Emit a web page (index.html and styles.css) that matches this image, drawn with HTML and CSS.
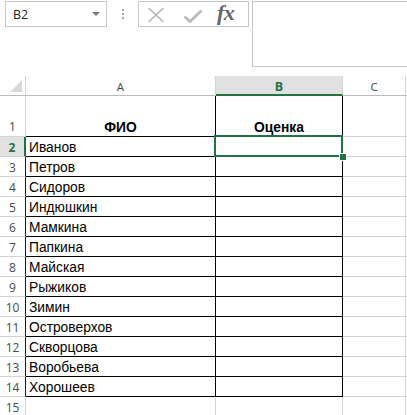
FILE: index.html
```html
<!DOCTYPE html>
<html>
<head>
<meta charset="utf-8">
<link rel="stylesheet" href="styles.css">
</head>
<body>
<div class="toolbar">
  <div class="namebox"><span class="nb-text">B2</span><span class="nb-arrow"></span></div>
  <div class="dots"><i></i><i></i><i></i></div>
  <div class="fbtns">
    <svg class="ic-x" width="20" height="16" viewBox="0 0 20 16"><path d="M2.5 1 L17.5 15 M17.5 1 L2.5 15" stroke="#b4b4b4" stroke-width="1.6" fill="none"/></svg>
    <svg class="ic-ok" width="20" height="14" viewBox="0 0 20 14"><path d="M1.5 7.5 L7 12.5 L18.5 1.5" stroke="#bdbdbd" stroke-width="3" fill="none"/></svg>
    <span class="fx">fx</span>
  </div>
  <div class="fbar"></div>
</div>
<div class="sheet">
  <div class="corner"><span class="tri"></span></div>
  <div class="colh">A</div>
  <div class="colh sel">B</div>
  <div class="colh">C</div>
  <div class="colh end"></div>

  <div class="rowh r1">1</div>
  <div class="cell a r1 bold center">ФИО</div>
  <div class="cell b r1 bold center">Оценка</div>
  <div class="cell c r1"></div>
  <div class="cell e r1"></div>

  <div class="rowh selrow">2</div>
  <div class="cell a">Иванов</div>
  <div class="cell b active"><span class="selbox"></span><span class="handle"></span></div>
  <div class="cell c"></div>
  <div class="cell e"></div>

  <div class="rowh">3</div><div class="cell a">Петров</div><div class="cell b"></div><div class="cell c"></div><div class="cell e"></div>
  <div class="rowh">4</div><div class="cell a">Сидоров</div><div class="cell b"></div><div class="cell c"></div><div class="cell e"></div>
  <div class="rowh">5</div><div class="cell a">Индюшкин</div><div class="cell b"></div><div class="cell c"></div><div class="cell e"></div>
  <div class="rowh">6</div><div class="cell a">Мамкина</div><div class="cell b"></div><div class="cell c"></div><div class="cell e"></div>
  <div class="rowh">7</div><div class="cell a">Папкина</div><div class="cell b"></div><div class="cell c"></div><div class="cell e"></div>
  <div class="rowh">8</div><div class="cell a">Майская</div><div class="cell b"></div><div class="cell c"></div><div class="cell e"></div>
  <div class="rowh">9</div><div class="cell a">Рыжиков</div><div class="cell b"></div><div class="cell c"></div><div class="cell e"></div>
  <div class="rowh">10</div><div class="cell a">Зимин</div><div class="cell b"></div><div class="cell c"></div><div class="cell e"></div>
  <div class="rowh">11</div><div class="cell a">Островерхов</div><div class="cell b"></div><div class="cell c"></div><div class="cell e"></div>
  <div class="rowh">12</div><div class="cell a">Скворцова</div><div class="cell b"></div><div class="cell c"></div><div class="cell e"></div>
  <div class="rowh">13</div><div class="cell a">Воробьева</div><div class="cell b"></div><div class="cell c"></div><div class="cell e"></div>
  <div class="rowh">14</div><div class="cell a">Хорошеев</div><div class="cell b"></div><div class="cell c"></div><div class="cell e"></div>
  <div class="rowh last">15</div><div class="cell a last"></div><div class="cell b last"></div><div class="cell c last"></div><div class="cell e last"></div>
</div>
</body>
</html>
```
FILE: styles.css
```css
html, body {
  margin: 0;
  padding: 0;
  background: #fff;
  overflow: hidden;
}
body {
  width: 407px;
  height: 415px;
  font-family: "Liberation Sans", Arial, sans-serif;
}
.toolbar {
  display: flex;
  align-items: flex-start;
  padding-top: 1px;
  height: 76px;
  box-sizing: border-box;
}
.namebox {
  margin-left: 5px;
  width: 102px;
  height: 26px;
  box-sizing: border-box;
  border: 1px solid #c6c6c6;
  display: flex;
  align-items: center;
  justify-content: space-between;
  padding: 0 6px 0 7px;
}
.nb-text {
  font-family: "Open Sans", "Noto Sans", sans-serif;
  font-size: 12.5px;
  color: #222;
  margin-top: 1px;
}
.nb-arrow {
  width: 0;
  height: 0;
  border-left: 4px solid transparent;
  border-right: 4px solid transparent;
  border-top: 4px solid #777;
  margin-top: -1px;
}
.dots {
  width: 31px;
  height: 26px;
  display: flex;
  flex-direction: column;
  align-items: center;
  justify-content: center;
  gap: 2px;
}
.dots i {
  display: block;
  width: 2px;
  height: 2px;
  background: #a8a8a8;
}
.fbtns {
  width: 111px;
  height: 26px;
  box-sizing: border-box;
  border: 1px solid #c6c6c6;
  display: flex;
  align-items: center;
  padding-left: 7px;
}
.ic-x { margin-top: 1px; }
.ic-ok { margin-left: 17px; margin-top: 3px; }
.fx {
  font-family: "Liberation Serif", "DejaVu Serif", serif;
  font-style: italic;
  font-weight: bold;
  font-size: 22px;
  color: #666;
  margin-left: 14px;
  margin-top: -3px;
  letter-spacing: -0.5px;
}
.fbar {
  margin-left: 3px;
  flex: 1;
  height: 66px;
  box-sizing: border-box;
  border: 1px solid #c6c6c6;
  border-right: none;
}

.sheet {
  display: grid;
  grid-template-columns: 26px 190px 127px 63px 1fr;
  grid-template-rows: 20px 41px repeat(14, 20px);
}
.sheet > div {
  box-sizing: border-box;
  border-right: 1px solid #d4d4d4;
  border-bottom: 1px solid #d4d4d4;
}
.corner {
  position: relative;
  border-bottom-color: #bcbcbc !important;
}
.corner .tri {
  position: absolute;
  right: 3px;
  bottom: 3px;
  width: 0;
  height: 0;
  border-left: 12px solid transparent;
  border-bottom: 12px solid #dadada;
}
.colh {
  font-family: "Open Sans", "Noto Sans", sans-serif;
  font-size: 11.5px;
  color: #444;
  display: flex;
  align-items: center;
  justify-content: center;
  border-bottom-color: #bcbcbc !important;
  padding-top: 1px;
}
.colh.sel {
  background: #e1e1e1;
  color: #217346;
  font-weight: bold;
  font-size: 12.5px;
  border-bottom: 2px solid #217346 !important;
  padding-top: 2px;
}
.colh.end { border-right: none; }
.rowh {
  font-family: "Open Sans", "Noto Sans", sans-serif;
  font-size: 12px;
  color: #4a4a4a;
  display: flex;
  align-items: center;
  justify-content: center;
  padding-top: 2px;
  border-right-color: #1a1a1a !important;
}
.rowh.r1 {
  align-items: flex-end;
  padding-bottom: 1px;
  border-right-color: #d4d4d4 !important;
}
.rowh.selrow {
  background: #e1e1e1;
  color: #217346;
  font-weight: bold;
  border-right: 2px solid #217346 !important;
}
.rowh.last {
  border-right-color: #d4d4d4 !important;
  align-items: flex-start;
  padding-top: 2px;
}
.cell {
  font-size: 13.8px;
  color: #000;
  display: flex;
  align-items: flex-end;
  padding: 0 0 1px 3px;
  white-space: nowrap;
}
.cell.center { justify-content: center; padding-left: 0; }
.cell.bold { font-weight: bold; }
.cell.a, .cell.b {
  border-right-color: #000;
  border-bottom-color: #000;
}
.cell.last { border-bottom: none; }
.cell.a.last { border-right-color: #d4d4d4; }
.cell.b.last { border-right-color: #d4d4d4; }
.cell.e { border-right: none; }
.cell.active { position: relative; }
.selbox {
  position: absolute;
  left: -2px;
  top: -2px;
  width: 129px;
  height: 22px;
  box-sizing: border-box;
  border: 2px solid #217346;
}
.handle {
  position: absolute;
  right: -4px;
  bottom: -4px;
  width: 6px;
  height: 6px;
  background: #217346;
  outline: 1px solid #fff;
}
```
